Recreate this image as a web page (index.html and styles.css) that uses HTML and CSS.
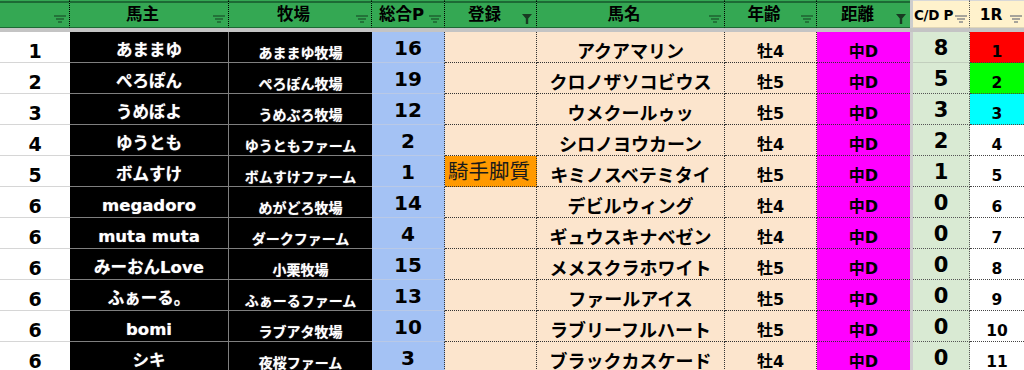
FILE: index.html
```html
<!DOCTYPE html>
<html lang="ja">
<head>
<meta charset="utf-8">
<title>馬主一覧</title>
<link rel="stylesheet" href="styles.css">
</head>
<body>
<div class="sheet">
  <div class="sep"></div>
  <div class="band"></div>

  <div class="h"><span class="ht"></span><svg class="fi" viewBox="0 0 12 8" width="12" height="8"><path d="M0 1h12M2 4h8M4 7h4"/></svg></div>
  <div class="h"><span class="ht">馬主</span><svg class="fi" viewBox="0 0 12 8" width="12" height="8"><path d="M0 1h12M2 4h8M4 7h4"/></svg></div>
  <div class="h"><span class="ht">牧場</span><svg class="fi" viewBox="0 0 12 8" width="12" height="8"><path d="M0 1h12M2 4h8M4 7h4"/></svg></div>
  <div class="h"><span class="ht">総合P</span><svg class="fi" viewBox="0 0 12 8" width="12" height="8"><path d="M0 1h12M2 4h8M4 7h4"/></svg></div>
  <div class="h"><span class="ht">登録</span><svg class="fa" viewBox="0 0 10 10" width="10" height="10"><path d="M0 0h10L6.2 4.5V10H3.8V4.5z"/></svg></div>
  <div class="h"><span class="ht">馬名</span><svg class="fi" viewBox="0 0 12 8" width="12" height="8"><path d="M0 1h12M2 4h8M4 7h4"/></svg></div>
  <div class="h"><span class="ht">年齢</span><svg class="fi" viewBox="0 0 12 8" width="12" height="8"><path d="M0 1h12M2 4h8M4 7h4"/></svg></div>
  <div class="h h-last"><span class="ht">距離</span><svg class="fa" viewBox="0 0 10 10" width="10" height="10"><path d="M0 0h10L6.2 4.5V10H3.8V4.5z"/></svg></div>
  <div class="h h-cream"><span class="ht ht-sm">C/D P</span><svg class="fi" viewBox="0 0 12 8" width="12" height="8"><path d="M0 1h12M2 4h8M4 7h4"/></svg></div>
  <div class="h h-cream h-end"><span class="ht ht-r">1R</span><svg class="fi" viewBox="0 0 12 8" width="12" height="8"><path d="M0 1h12M2 4h8M4 7h4"/></svg></div>

  <div class="c rank">1</div><div class="c owner">あままゆ</div><div class="c farm">あままゆ牧場</div><div class="c pt">16</div><div class="c reg"></div><div class="c name">アクアマリン</div><div class="c age">牡4</div><div class="c dist">中D</div><div class="c cd cd-first">8</div><div class="c r1 red">1</div>
  <div class="c rank">2</div><div class="c owner">ぺろぽん</div><div class="c farm">ぺろぽん牧場</div><div class="c pt">19</div><div class="c reg"></div><div class="c name">クロノザソコビウス</div><div class="c age">牡5</div><div class="c dist">中D</div><div class="c cd">5</div><div class="c r1 green">2</div>
  <div class="c rank">3</div><div class="c owner">うめぼよ</div><div class="c farm">うめぶろ牧場</div><div class="c pt">12</div><div class="c reg"></div><div class="c name">ウメクールゥッ</div><div class="c age">牡5</div><div class="c dist">中D</div><div class="c cd">3</div><div class="c r1 cyan">3</div>
  <div class="c rank">4</div><div class="c owner">ゆうとも</div><div class="c farm">ゆうともファーム</div><div class="c pt">2</div><div class="c reg"></div><div class="c name">シロノヨウカーン</div><div class="c age">牡4</div><div class="c dist">中D</div><div class="c cd">2</div><div class="c r1">4</div>
  <div class="c rank">5</div><div class="c owner">ボムすけ</div><div class="c farm">ボムすけファーム</div><div class="c pt">1</div><div class="c reg reg-on">騎手脚質</div><div class="c name">キミノスベテミタイ</div><div class="c age">牡5</div><div class="c dist">中D</div><div class="c cd">1</div><div class="c r1">5</div>
  <div class="c rank">6</div><div class="c owner">megadoro</div><div class="c farm">めがどろ牧場</div><div class="c pt">14</div><div class="c reg"></div><div class="c name">デビルウィング</div><div class="c age">牡4</div><div class="c dist">中D</div><div class="c cd">0</div><div class="c r1">6</div>
  <div class="c rank">6</div><div class="c owner">muta muta</div><div class="c farm">ダークファーム</div><div class="c pt">4</div><div class="c reg"></div><div class="c name">ギュウスキナベゼン</div><div class="c age">牡4</div><div class="c dist">中D</div><div class="c cd">0</div><div class="c r1">7</div>
  <div class="c rank">6</div><div class="c owner">みーおんLove</div><div class="c farm">小栗牧場</div><div class="c pt">15</div><div class="c reg"></div><div class="c name">メメスクラホワイト</div><div class="c age">牡5</div><div class="c dist">中D</div><div class="c cd">0</div><div class="c r1">8</div>
  <div class="c rank">6</div><div class="c owner">ふぁーる。</div><div class="c farm">ふぁーるファーム</div><div class="c pt">13</div><div class="c reg"></div><div class="c name">ファールアイス</div><div class="c age">牡5</div><div class="c dist">中D</div><div class="c cd">0</div><div class="c r1">9</div>
  <div class="c rank">6</div><div class="c owner">bomi</div><div class="c farm">ラブアタ牧場</div><div class="c pt">10</div><div class="c reg"></div><div class="c name">ラブリーフルハート</div><div class="c age">牡5</div><div class="c dist">中D</div><div class="c cd">0</div><div class="c r1">10</div>
  <div class="c rank">6</div><div class="c owner">シキ</div><div class="c farm">夜桜ファーム</div><div class="c pt">3</div><div class="c reg"></div><div class="c name">ブラックカスケード</div><div class="c age">牡4</div><div class="c dist">中D</div><div class="c cd">0</div><div class="c r1">11</div>
</div>
</body>
</html>
```

FILE: styles.css
```css
html, body {
  margin: 0;
  padding: 0;
  background: #ffffff;
  overflow: hidden;
}

body {
  width: 1024px;
  height: 370px;
  font-family: "DejaVu Sans", "Noto Sans CJK JP", sans-serif;
  font-weight: 700;
  color: #000;
}

.sheet {
  display: grid;
  grid-template-columns: 70px 159px 143px 73px 92px 188px 92px 93px 3px 57px 54px;
  grid-template-rows: 28px 4px repeat(11, 31px);
}

.sep {
  grid-column: 9;
  grid-row: 1 / -1;
  background: #cdcdcd;
}

.band {
  grid-column: 1 / -1;
  grid-row: 2;
  background: #c4c4c4;
}

/* header */
.h {
  box-sizing: border-box;
  display: flex;
  align-items: center;
  background: #34a853;
  border-top: 1px solid #34a853;
  box-shadow: inset 0 2px 0 #1d6a35;
  border-bottom: 1px solid #1d6a35;
  border-right: 1px dotted #000;
  padding-right: 3px;
}

.h-last {
  border-right: none;
}

.h-cream {
  background: #fff2cc;
  border-top: 1px solid #d8d8d8;
  box-shadow: none;
  border-bottom: 1px solid #e0d6b8;
  border-right: 1px dotted #555;
  padding-right: 2px;
}

.h-end {
  border-right: none;
}

.ht {
  flex: 1;
  text-align: center;
  font-size: 16.5px;
  line-height: 1;
  padding-top: 3px;
  padding-left: 2px;
  white-space: nowrap;
}

.ht-sm {
  font-size: 13.5px;
  text-align: left;
  padding-left: 1px;
  letter-spacing: -0.3px;
}

.ht-r {
  font-size: 15.5px;
}

.fi {
  align-self: flex-end;
  margin-bottom: 4px;
  flex: none;
}

.fi path {
  fill: none;
  stroke: rgba(0, 0, 0, 0.42);
  stroke-width: 1.5;
}

.h-cream .fi path {
  stroke: #8a8a8a;
}

.fa {
  align-self: flex-end;
  margin-bottom: 3px;
  margin-right: 1px;
  flex: none;
}

.fa path {
  fill: #183a22;
}

/* body cells */
.c {
  box-sizing: border-box;
  display: flex;
  align-items: center;
  justify-content: center;
  padding-top: 3px;
  line-height: 1;
  white-space: nowrap;
  overflow: hidden;
}

.rank {
  font-size: 19px;
  background: #fff;
  border-bottom: 1px solid #d6d6d6;
  padding-top: 8px;
}

.owner {
  background: #000;
  color: #fff;
  font-size: 16.5px;
  border-bottom: 1px solid #7f7f7f;
  border-right: 1px solid #7f7f7f;
  padding-top: 8px;
  text-shadow: 0 0 1px rgba(255, 255, 255, 0.6);
}

.farm {
  background: #000;
  color: #fff;
  font-size: 14px;
  border-bottom: 1px solid #7f7f7f;
  padding-top: 11px;
  text-shadow: 0 0 1px rgba(255, 255, 255, 0.6);
}

.pt {
  background: #a4c2f4;
  font-size: 20px;
  border-bottom: 1px solid #b9c9e6;
  border-right: 1px dotted #333;
  padding-top: 2px;
}

.reg {
  background: #fce5cd;
  border-bottom: 1px dotted #333;
  border-right: 1px dotted #333;
}

.reg-on {
  background: #ff9900;
  font-size: 20.5px;
  font-weight: 400;
  justify-content: flex-start;
  padding-left: 3px;
  padding-top: 3px;
  color: #1a1a1a;
}

.name {
  background: #fce5cd;
  font-size: 18px;
  border-bottom: 1px dotted #333;
  border-right: 1px dotted #333;
  padding-top: 9px;
}

.age {
  background: #fce5cd;
  font-size: 16px;
  border-bottom: 1px dotted #333;
  border-right: 1px dotted #333;
  padding-top: 10px;
}

.dist {
  background: #ff00ff;
  font-size: 16px;
  border-bottom: 1px dotted #333;
  padding-top: 10px;
}

.cd {
  background: #d9ead3;
  font-size: 21px;
  border-bottom: 1px dotted #555;
  border-right: 1px dotted #555;
  padding-top: 2px;
}

.cd-first {
  border-bottom: 1px solid #c2cfbd;
}

.r1 {
  background: #fff;
  font-size: 15.5px;
  border-bottom: 1px dotted #444;
  padding-top: 12px;
}

.red {
  background: #ff0000;
}

.green {
  background: #00ff00;
}

.cyan {
  background: #00ffff;
}
```
